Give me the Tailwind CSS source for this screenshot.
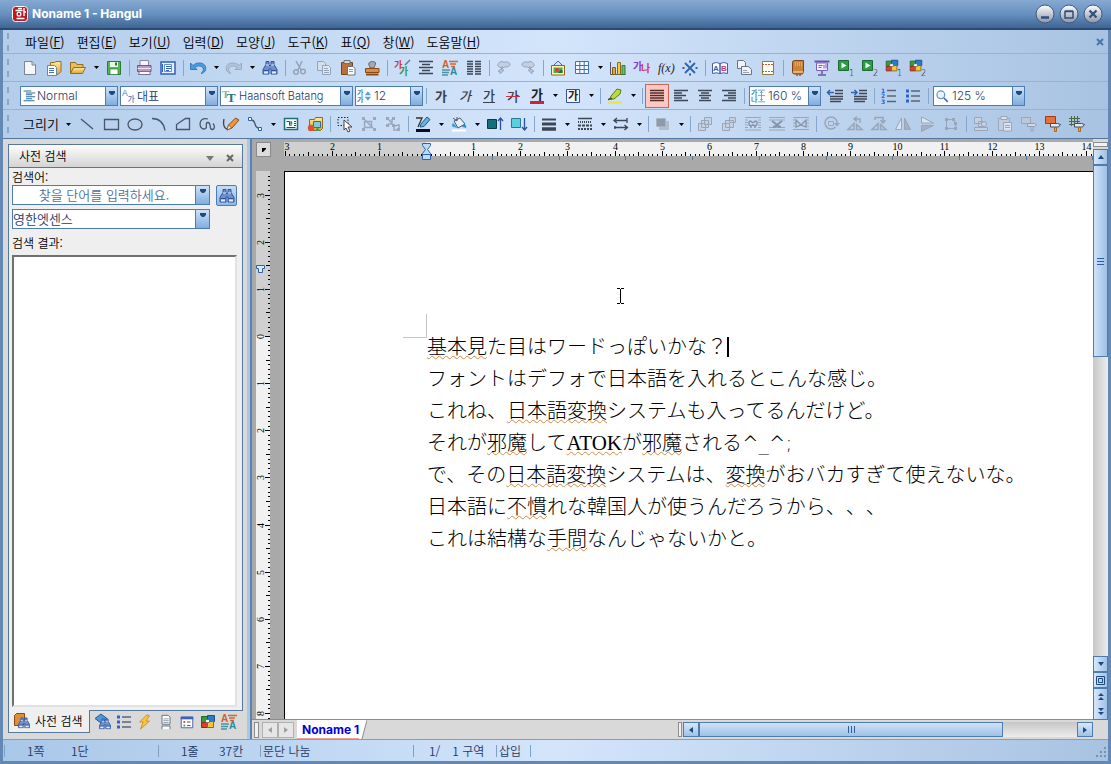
<!DOCTYPE html>
<html lang="ko">
  <head>
    <meta charset="UTF-8" />
    <meta name="viewport" content="width=device-width, initial-scale=1.0" />
    <script src="https://cdn.jsdelivr.net/npm/@tailwindcss/browser@4"></script>
    <title>Noname 1 - Hangul</title>
  </head>
  <body class="flex h-screen flex-col overflow-hidden bg-[#5a7fa8] font-['Noto_Sans_CJK_KR',sans-serif] text-[13px] leading-4 font-[350] text-black select-none">
    <!-- icon sprite -->
    <svg class="absolute size-0" xmlns="http://www.w3.org/2000/svg">
      <defs>
        <linearGradient id="gGold" x1="0" y1="0" x2="0" y2="1"><stop offset="0" stop-color="#fdeb9a" /><stop offset="1" stop-color="#dca23a" /></linearGradient>
        <linearGradient id="gSilver" x1="0" y1="0" x2="0" y2="1"><stop offset="0" stop-color="#fff" /><stop offset=".5" stop-color="#c3c9d3" /><stop offset="1" stop-color="#8b95a5" /></linearGradient>
      </defs>
      <symbol id="new" viewBox="0 0 18 18"><path d="M3.500 2.500h7.500l3.500 3.500v9.500h-11z" fill="#f6f7fa" stroke="#7b8290" /><path d="M11 2.500v3.500h3.500" fill="#cfd4de" stroke="#7b8290" /></symbol>
      <symbol id="docs" viewBox="0 0 18 18"><path d="M5.500 3.500h4l1.500-1h5v10l-3 3h-7.500z" fill="url(#gGold)" stroke="#9a6d1c" /><path d="M2.500 6.500h7l2 2v8h-9z" fill="#fff" stroke="#6d87a8" /><path d="M4 9.500h5M4 11.500h5M4 13.500h5" stroke="#4a6fa5" /></symbol>
      <symbol id="open" viewBox="0 0 18 18"><path d="M1.500 14.500v-11h5l1.500 2h6v3" fill="#e8bd5a" stroke="#9a6d1c" /><path d="M1.500 14.500l3-6h12l-3 6z" fill="url(#gGold)" stroke="#9a6d1c" /></symbol>
      <symbol id="save" viewBox="0 0 18 18"><path d="M2.500 2.500h13v13h-13z" fill="#58b558" stroke="#2c7a34" /><path d="M5 3h8v5H5z" fill="#eafbe4" /><path d="M5 10h8v5.500H5z" fill="#fff" stroke="#2c7a34" stroke-width=".7" /><path d="M10 3.500h2v3h-2z" fill="#2c7a34" /></symbol>
      <symbol id="print" viewBox="0 0 18 18"><path d="M5 1.500h8.500v6H5z" fill="#f4f4fb" stroke="#8a83a8" /><path d="M2.500 6.500h13.500v6H2.500z" fill="#b89ac4" stroke="#6d5a80" /><path d="M2.500 9.500h13.500" stroke="#efe2f4" /><path d="M4.500 12.500h10l1 3h-12z" fill="#fff" stroke="#77708c" /></symbol>
      <symbol id="preview" viewBox="0 0 18 18"><path d="M2 3h14v12H2z" fill="#e9f2ff" stroke="#2f5fc0" stroke-width="1.500" /><path d="M5.500 5.500h7v7h-7z" fill="#fff" stroke="#6a8fd0" /><path d="M3.500 5v8M7 7.500h5M7 9.500h5M7 11.500h3" stroke="#2f5fc0" /></symbol>
      <symbol id="undo" viewBox="0 0 18 18"><path d="M1.500 4v6.500h6.500l-2-2c3-2.500 7-1.500 8 .5s0 4-2 5.500c4-.5 5.500-4 4.500-7-1.500-4-8.500-5-12.500-1z" fill="#4a9be0" stroke="#2369b0" stroke-width=".8" /></symbol>
      <symbol id="redo" viewBox="0 0 18 18"><path d="M16.500 4v6.500h-6.500l2-2c-3-2.500-7-1.500-8 .5s0 4 2 5.500c-4-.5-5.500-4-4.500-7 1.500-4 8.500-5 12.500-1z" fill="#b4c4d8" stroke="#8fa2ba" stroke-width=".8" /></symbol>
      <symbol id="find" viewBox="0 0 18 18"><path d="M5 2.500h3v4h2v-4h3v3l3 5v4.500h-6v-5h-2v5H2v-4.500l3-5z" fill="#6f8fcf" stroke="#30529b" /><path d="M2.500 11.500h5M10.500 11.500h5" stroke="#30529b" /><path d="M5 6h3M10 6h3" stroke="#dbe7fb" /><path d="M3 13.500h4M11 13.500h4" stroke="#e6eefc" stroke-width="2" /></symbol>
      <symbol id="cut" viewBox="0 0 18 18"><path d="M5 2l5 9M11 2l-4 9" stroke="#94a3b8" stroke-width="1.500" fill="none" /><circle cx="5" cy="13" r="2.300" fill="none" stroke="#94a3b8" stroke-width="1.500" /><circle cx="12" cy="12.500" r="2.300" fill="none" stroke="#94a3b8" stroke-width="1.500" /></symbol>
      <symbol id="copy" viewBox="0 0 18 18"><path d="M2.500 2.500h6l2 2v7h-8z" fill="#d5dfec" stroke="#94a3b8" /><path d="M7.500 6.500h6l2 2v7h-8z" fill="#dfe7f1" stroke="#94a3b8" /><path d="M9 9.500h4M9 11.500h5M9 13.500h5" stroke="#94a3b8" /></symbol>
      <symbol id="paste" viewBox="0 0 18 18"><path d="M2.500 3.500h11v12h-11z" fill="#b9733a" stroke="#7a4416" /><path d="M5 1.500h6v3H5z" fill="#d6d9df" stroke="#6b7280" /><path d="M8.500 7.500h5.500l2 2v6.500H8.500z" fill="#fff" stroke="#6b7280" /><path d="M10 10.500h4M10 12.500h4" stroke="#8b98ad" /></symbol>
      <symbol id="stamp" viewBox="0 0 18 18"><path d="M7 9c0-2-2-3-1-5s6-2 6.500 0-1.500 3-1.500 5z" fill="#a7a9b0" stroke="#5c6068" /><path d="M2.500 9.500h13.500v4H2.500z" fill="#d98b4a" stroke="#8a4a18" /><path d="M3 15.500h12.500" stroke="#8a4a18" stroke-width="2" /></symbol>
      <symbol id="charshape" viewBox="0 0 18 18"><text x="1" y="9" font-size="9" font-weight="bold" fill="#c23a4a">가</text><text x="6" y="16" font-size="10" font-weight="bold" fill="#2f9a5a">가</text><path d="M12 6l5-5" stroke="#6a7486" stroke-width="1.500" /></symbol>
      <symbol id="parashape" viewBox="0 0 18 18"><path d="M2 2.500h14M5 5.500h8M2 8.500h14M5 11.500h8M2 14.500h14" stroke="#3c4654" stroke-width="1.500" /></symbol>
      <symbol id="style" viewBox="0 0 18 18"><text x="1" y="9" font-size="10" font-weight="bold" font-family="Liberation Sans" fill="#d0602a">A</text><text x="9" y="16" font-size="10" font-weight="bold" font-family="Liberation Sans" fill="#2a8a9a">A</text><path d="M8 2.500h9M9 5h6M10 7.500h4" stroke="#c96a3c" stroke-width="1.300" /><path d="M1 11h8M1 13.500h7M1 16h6" stroke="#4a93a3" stroke-width="1.300" /></symbol>
      <symbol id="columns" viewBox="0 0 18 18"><path d="M2 2.500h6M2 5h6M2 7.500h6M2 10h6M2 12.500h6M2 15h6M10 2.500h6M10 5h6M10 7.500h6M10 10h6M10 12.500h6M10 15h6" stroke="#3c4654" stroke-width="1.300" /></symbol>
      <symbol id="cloudL" viewBox="0 0 18 18"><path d="M8 8c-4 2-7-2-4-4 1-2 4-2 5-.5 2-1.500 7 0 6 2.500s-4 2-6 2l-3 3h3l-4 4v-3l-2 .5z" fill="#c3cfdf" stroke="#95a6bd" /></symbol>
      <symbol id="cloudR" viewBox="0 0 18 18"><path d="M10 8c4 2 7-2 4-4-1-2-4-2-5-.5-2-1.500-7 0-6 2.500s4 2 6 2l3 3h-3l4 4v-3l2 .5z" fill="#c3cfdf" stroke="#95a6bd" /></symbol>
      <symbol id="picture" viewBox="0 0 18 18"><path d="M5 6l4-4 4 4" fill="none" stroke="#4466a8" /><path d="M2.500 6.500h13v9.500h-13z" fill="#fdf3c0" stroke="#8a6a1c" /><path d="M4.500 8.500h9v5.500h-9z" fill="#58a858" /><circle cx="8" cy="11" r="2" fill="#d8402c" /><path d="M9 14l3-3.500 1.500 1V14z" fill="#2a6e34" /></symbol>
      <symbol id="table" viewBox="0 0 18 18"><path d="M2.500 2.500h13v12h-13zM2.500 6.500h13M2.500 10.500h13M6.800 2.500v12M11.200 2.500v12" fill="#f4f9ff" stroke="#3f6fc0" /></symbol>
      <symbol id="chart" viewBox="0 0 18 18"><path d="M1.500 3v12.500h15" fill="none" stroke="#49586e" /><path d="M3.500 8.500h3v7h-3z" fill="#e8a03a" stroke="#8a5a1a" /><path d="M8.500 3.500h3v12h-3z" fill="#f2cb3a" stroke="#8a6a1c" /><path d="M13 6.500h3v9h-3z" fill="#6fc06a" stroke="#2f7a34" /></symbol>
      <symbol id="wordart" viewBox="0 0 18 18"><text x="0" y="11" font-size="10" font-weight="bold" fill="#8a3ac0">가</text><text x="8" y="13" font-size="10" font-weight="bold" fill="#d03a6a">나</text></symbol>
      <symbol id="fx" viewBox="0 0 18 18"><text x="1" y="13" font-size="12" font-style="italic" font-family="Liberation Serif" fill="#222">f(x)</text></symbol>
      <symbol id="snow" viewBox="0 0 18 18"><path d="M4 4l10 10M14 4L4 14" stroke="#2f62b0" stroke-width="1.800" /><path d="M8 2.500h2M8 15.500h2M2.500 8v2M15.500 8v2" stroke="#2f62b0" stroke-width="2" /></symbol>
      <symbol id="ab" viewBox="0 0 18 18"><path d="M1.500 4.500q4-2 7.500 0v10q-4-1.500-7.500 0zM9 4.500q4-2 7.500 0v10q-4-1.500-7.500 0z" fill="#fff" stroke="#4a5a9a" /><text x="2" y="12" font-size="8" font-weight="bold" font-family="Liberation Sans" fill="#2f62c0">A</text><text x="10" y="12" font-size="8" font-weight="bold" font-family="Liberation Sans" fill="#c03a8a">B</text></symbol>
      <symbol id="twodoc" viewBox="0 0 18 18"><path d="M2.500 1.500h6l2 2v6h-8z" fill="#eef1f6" stroke="#6b7280" /><path d="M6.500 7.500h7l3 3v5h-10z" fill="#eef1f6" stroke="#6b7280" /><path d="M8 11.500h4M8 13.500h6" stroke="#9aa3b3" /></symbol>
      <symbol id="pagenote" viewBox="0 0 18 18"><path d="M3.500 2.500h11v13h-11z" fill="#fffdf0" stroke="#8a7a4a" /><path d="M3 5.500h12M3 12.500h12" stroke="#e04a3a" stroke-dasharray="2 1" /></symbol>
      <symbol id="book" viewBox="0 0 18 18"><path d="M3.500 3.500q0-2 2-2h9v11l-1 2.500h-8q-2 0-2-2z" fill="#c9853a" stroke="#7a4416" /><path d="M6 4h7M6 6h7" stroke="#f6cf7a" stroke-dasharray="1 1" /><path d="M4 13h10" stroke="#fbe6b8" /><path d="M8 14v3M11 14v3" stroke="#d03a2a" stroke-width="1.500" /></symbol>
      <symbol id="present" viewBox="0 0 18 18"><path d="M1.500 2.500h15" stroke="#6a52a8" stroke-width="2" /><path d="M3.500 4h11v7.500h-11z" fill="#f4efff" stroke="#7a62b8" /><path d="M5.500 6.500h4M5.500 8.500h3M11 9.500V6M13 9.500V5" stroke="#8a52c8" /><path d="M9 12v3M5 16h8" stroke="#6a52a8" stroke-width="1.500" /></symbol>
      <symbol id="play1" viewBox="0 0 18 18"><path d="M1.500 1.500h10v10h-10z" fill="#2f9a4a" stroke="#1d6a30" /><path d="M4.500 3.500l5 3-5 3z" fill="#e8ffe8" /><text x="12" y="17" font-size="8" font-family="DejaVu Sans">1</text></symbol>
      <symbol id="play2" viewBox="0 0 18 18"><path d="M1.500 1.500h10v10h-10z" fill="#2f9a4a" stroke="#1d6a30" /><path d="M4.500 3.500l5 3-5 3z" fill="#e8ffe8" /><text x="12" y="17" font-size="8" font-family="DejaVu Sans">2</text></symbol>
      <symbol id="cubes" viewBox="0 0 18 18"><path d="M2.500 3.500h6v6h-6z" fill="#3a9a3a" stroke="#1d6a30" /><path d="M8.500 2.500h7v6h-7z" fill="#2a7ac8" stroke="#1f4f8a" /><path d="M2.500 9.500h6v5h-6z" fill="#d8402c" stroke="#8a2f1a" /><path d="M8.500 8.500h6v6h-6z" fill="#f2c83a" stroke="#8a6a1c" /><path d="M6.500 6.500h4v3h-4z" fill="#fff" stroke="#555" stroke-width=".7" /></symbol>
      <symbol id="cubes1" viewBox="0 0 18 18"><use href="#cubes" x="-1" y="-1" width="16" height="16" /><text x="12" y="17" font-size="8" font-family="DejaVu Sans">1</text></symbol>
      <symbol id="cubes2" viewBox="0 0 18 18"><use href="#cubes" x="-1" y="-1" width="16" height="16" /><text x="12" y="17" font-size="8" font-family="DejaVu Sans">2</text></symbol>

      <symbol id="ga" viewBox="0 0 18 18"><text x="3" y="14" font-size="13" font-weight="bold" fill="#3a3f48">가</text></symbol>
      <symbol id="gaI" viewBox="0 0 18 18"><text x="3" y="14" font-size="13" font-style="italic" font-weight="500" fill="#3a3f48">가</text></symbol>
      <symbol id="gaU" viewBox="0 0 18 18"><text x="3" y="13" font-size="13" font-weight="500" fill="#3a3f48">가</text><path d="M3 15.500h12" stroke="#3a3f48" /></symbol>
      <symbol id="gaS" viewBox="0 0 18 18"><text x="3" y="14" font-size="13" font-weight="500" fill="#3a3f48">가</text><path d="M2 9.500h14" stroke="#d0304a" /></symbol>
      <symbol id="gaC" viewBox="0 0 18 18"><text x="3" y="12" font-size="13" font-weight="bold" fill="#222">가</text><path d="M2 15.500h14" stroke="#d0203a" stroke-width="3" /></symbol>
      <symbol id="gaB" viewBox="0 0 18 18"><path d="M2.500 2.500h13v13h-13z" fill="#f2f6ff" stroke="#3050a8" /><text x="4" y="13" font-size="11" font-weight="bold" fill="#222">가</text></symbol>
      <symbol id="marker" viewBox="0 0 18 18"><path d="M5 9l6-7 4 1-1 4-6 5H4z" fill="#b8dc3a" stroke="#5a7a1c" /><path d="M2 12.500l4-1" stroke="#444" stroke-width="1.500" /><path d="M2 15.500h14" stroke="#e8e84a" stroke-width="3" /></symbol>
      <symbol id="justify" viewBox="0 0 18 18"><path d="M2 3.500h14M2 6h14M2 8.500h14M2 11h14M2 13.500h14" stroke="#5a2a2a" stroke-width="1.300" /></symbol>
      <symbol id="alignL" viewBox="0 0 18 18"><path d="M2 3.500h14M2 6h8M2 8.500h12M2 11h8M2 13.500h14" stroke="#3c4654" stroke-width="1.300" /></symbol>
      <symbol id="alignC" viewBox="0 0 18 18"><path d="M2 3.500h14M5 6h8M3 8.500h12M5 11h8M3 13.500h12" stroke="#3c4654" stroke-width="1.300" /></symbol>
      <symbol id="alignR" viewBox="0 0 18 18"><path d="M2 3.500h14M8 6h8M4 8.500h12M8 11h8M2 13.500h14" stroke="#3c4654" stroke-width="1.300" /></symbol>
      <symbol id="outdent" viewBox="0 0 18 18"><path d="M9 3.500h8M9 6.500h8M4 9.500h13M4 12h13M4 14.500h11" stroke="#3c4654" stroke-width="1.500" /><path d="M1 5.500h7M4 3L1.500 5.500 4 8" fill="none" stroke="#2f62b0" stroke-width="1.500" /></symbol>
      <symbol id="indent" viewBox="0 0 18 18"><path d="M9 3.500h8M9 6.500h8M4 9.500h13M4 12h13M4 14.500h11" stroke="#3c4654" stroke-width="1.500" /><path d="M1 5.500h6M4.500 3L7 5.500 4.500 8" fill="none" stroke="#2f62b0" stroke-width="1.500" /></symbol>
      <symbol id="numlist" viewBox="0 0 18 18"><g font-size="6" font-weight="bold" font-family="DejaVu Sans" fill="#2f62d0"><text x="1" y="6">1</text><text x="1" y="11">2</text><text x="1" y="16.500">3</text></g><path d="M7 3.500h9M7 9h9M7 14.500h9" stroke="#5a6678" stroke-width="1.300" /></symbol>
      <symbol id="bullist" viewBox="0 0 18 18"><path d="M2 2.500h3v3H2zM2 7.500h3v3H2zM2 12.500h3v3H2z" fill="#2f62d0" /><path d="M7 4h9M7 9h9M7 14h9" stroke="#5a6678" stroke-width="1.300" /></symbol>

      <symbol id="line" viewBox="0 0 18 18"><path d="M3 4l12 10" stroke="#4a5568" stroke-width="1.300" /></symbol>
      <symbol id="rect" viewBox="0 0 18 18"><path d="M2.500 4.500h14v10h-14z" fill="none" stroke="#4a5568" stroke-width="1.300" /></symbol>
      <symbol id="ellipse" viewBox="0 0 18 18"><ellipse cx="9" cy="9.500" rx="7" ry="5.500" fill="none" stroke="#4a5568" stroke-width="1.300" /></symbol>
      <symbol id="arc" viewBox="0 0 18 18"><path d="M2 3.500q11 0 13 12" fill="none" stroke="#4a5568" stroke-width="1.300" /></symbol>
      <symbol id="poly" viewBox="0 0 18 18"><path d="M2.500 14.500v-5l9-6h4v11z" fill="none" stroke="#4a5568" stroke-width="1.300" /></symbol>
      <symbol id="curve" viewBox="0 0 18 18"><path d="M10 4c-5-1.500-8 1-8 5s3 6 5.500 4.500-1-6 2.500-6 1 7 4 7 3-4 1-6" fill="none" stroke="#4a5568" stroke-width="1.300" /></symbol>
      <symbol id="pencil" viewBox="0 0 18 18"><path d="M2 4c-1 5 0 9 3 10" fill="none" stroke="#444" stroke-width="1.300" /><path d="M5 15l1.500-5 7-7 3.500 2-7 8z" fill="#f0963a" stroke="#8a4a18" /><path d="M5 15l1.500-5 3 3z" fill="#fbe6c8" stroke="#8a4a18" stroke-width=".7" /></symbol>
      <symbol id="connect" viewBox="0 0 18 18"><path d="M5 5q3 0 4 4t4 4" fill="none" stroke="#4a5568" stroke-width="1.300" /><path d="M2.500 2.500h3v3h-3zM12.500 12.500h3v3h-3z" fill="#fff" stroke="#2f62b0" /></symbol>
      <symbol id="textbox" viewBox="0 0 18 18"><path d="M2.500 3.500h13v11h-13z" fill="#f4fffc" stroke="#1f6f7a" stroke-width="1.500" /><path d="M4.500 6.500h3v4M9 6v5M9 8h1.500M12 6.500h2M12 8.500h2M12 10.500h2M4.500 12.500h9" stroke="#1f4f5a" fill="none" /></symbol>
      <symbol id="clipart" viewBox="0 0 18 18"><path d="M3.500 4.500h5l1-2h7v11l-2 2h-11z" fill="url(#gGold)" stroke="#8a6a1c" /><path d="M7.500 6.500h7v6h-7z" fill="#8ac8d8" stroke="#3a6a8a" /><circle cx="5" cy="13" r="3.200" fill="#e0502c" /><path d="M9 16l2.500-4 2.500 4z" fill="#4a9a4a" /></symbol>
      <symbol id="pick" viewBox="0 0 18 18"><path d="M2 2.500h10v8H2z" fill="none" stroke="#222" stroke-dasharray="1.500 1.500" /><path d="M8 5l8 7h-4l2 4-2 1-2-4-2 2z" fill="#fff" stroke="#444" /></symbol>
      <symbol id="group" viewBox="0 0 18 18"><path d="M5 5l8 8M4.500 6.500h7v6h-7z" fill="none" stroke="#9aa8bb" stroke-width="1.500" /><path d="M2 2h3v3H2zM13 13h3v3h-3zM2 13h3v3H2zM13 2h3v3h-3z" fill="#9aa8bb" /></symbol>
      <symbol id="ungroup" viewBox="0 0 18 18"><path d="M3 3l5 5M8 4v5H4M15 10v5h-5v-4z" fill="none" stroke="#9aa8bb" stroke-width="1.500" /><path d="M2 2h3v3H2zM8 2h3v3H8zM2 9h3v3H2zM8 9h3v3H8zM13 13h3v3h-3z" fill="#9aa8bb" /></symbol>
      <symbol id="linecolor" viewBox="0 0 18 18"><path d="M2 3h6L4 12" fill="none" stroke="#333" stroke-width="1.300" /><path d="M6 12l1-3 6-7 3 2.500-6 7z" fill="#6ab0e0" stroke="#1f5a8a" /><path d="M2 15.500h14" stroke="#0a0a2a" stroke-width="3" /></symbol>
      <symbol id="fill" viewBox="0 0 18 18"><path d="M4 6l6-3 5 6-7 4z" fill="#e8eef6" stroke="#49586e" /><path d="M3 3l4 3v-4" fill="none" stroke="#49586e" /><path d="M14 9q3 1 2 4-2-1-4-1z" fill="#2a8ad0" /><path d="M3 8q-2 2 0 4l5 1z" fill="#3a9ad8" /><path d="M2 15.500h14" stroke="#fff" stroke-width="2" /></symbol>
      <symbol id="front" viewBox="0 0 18 18"><path d="M1.500 4.500h9v9h-9z" fill="#12707a" stroke="#0a3a44" /><path d="M14.500 15V4M12 6l2.500-3L17 6" fill="none" stroke="#2a52a0" stroke-width="1.300" /></symbol>
      <symbol id="back" viewBox="0 0 18 18"><path d="M1.500 3.500h9v9h-9z" fill="#58d0e0" stroke="#2a7a8a" /><path d="M14.500 3v11M12 12l2.500 3 2.500-3" fill="none" stroke="#2a52a0" stroke-width="1.300" /></symbol>
      <symbol id="linewidth" viewBox="0 0 18 18"><path d="M2 4.500h14" stroke="#3c4654" stroke-width="2" /><path d="M2 9h14" stroke="#3c4654" stroke-width="3" /><path d="M2 14h14" stroke="#3c4654" stroke-width="3.500" /></symbol>
      <symbol id="linestyle" viewBox="0 0 18 18"><path d="M2 3.500h14" stroke="#3c4654" stroke-width="1.500" /><path d="M2 7h14" stroke="#3c4654" stroke-width="2" stroke-dasharray="1 1" /><path d="M2 10.500h14" stroke="#3c4654" stroke-width="2" stroke-dasharray="3 1" /><path d="M2 14h14" stroke="#3c4654" stroke-width="2" stroke-dasharray="2 1" /></symbol>
      <symbol id="arrows" viewBox="0 0 18 18"><path d="M2 5.500h13M5 3L2 5.500 5 8M2 12.500h13M12.500 10l3 2.500-3 2.500M15 3v5M3 11v3" fill="none" stroke="#3c4654" stroke-width="1.300" /></symbol>
      <symbol id="shadow" viewBox="0 0 18 18"><path d="M5 6h10v9H5z" fill="#b3bcc9" /><path d="M2.500 3.500h9v8h-9z" fill="#8e99a9" stroke="#a9b4c4" /></symbol>
      <symbol id="stackA" viewBox="0 0 18 18"><path d="M8.500 2.500h7v7h-7zM5.500 5.500h7v7h-7zM2.500 8.500h7v7h-7z" fill="#c6d2e1" stroke="#98a6b9" /></symbol>
      <symbol id="stackB" viewBox="0 0 18 18"><path d="M2.500 8.500h7v7h-7zM9.500 2.500h6v5h-6zM5.500 5.500h8v7h-8z" fill="#c6d2e1" stroke="#98a6b9" /></symbol>
      <symbol id="wrap" viewBox="0 0 18 18"><path d="M1 2.500h16M1 5h3M14 5h3M1 7.500h3M14 7.500h3M1 10h3M14 10h3M1 12.500h3M14 12.500h3M1 15h16" stroke="#98a6b9" /><path d="M9 8q-4-4-4 0t4 2q4 2 4-2t-4 0M7 10v3M11 10v3" fill="none" stroke="#8694a8" stroke-width="1.500" /></symbol>
      <symbol id="wrapT" viewBox="0 0 18 18"><path d="M1 2.500h16M1 5h16M1 12.500h16M1 15h16" stroke="#98a6b9" /><path d="M4 6l4 3v2l-3 1M14 6l-4 3v2l3 1" fill="none" stroke="#8694a8" stroke-width="2" /></symbol>
      <symbol id="wrapB" viewBox="0 0 18 18"><path d="M1 2.500h16M1 5h2M15 5h2M1 8h3M14 8h3M1 11h2M15 11h2M1 14.500h16" stroke="#98a6b9" /><path d="M4 5l5 5 5-5v7l-5-2-5 2z" fill="none" stroke="#8694a8" stroke-width="1.300" /></symbol>
      <symbol id="rotate" viewBox="0 0 18 18"><path d="M13.500 12A6 6 0 1 1 15 8" fill="none" stroke="#98a6b9" stroke-width="1.500" /><path d="M12 8h6l-3 3.500z" fill="#98a6b9" /><path d="M6.500 6.500h5v4h-5z" fill="none" stroke="#98a6b9" /></symbol>
      <symbol id="rotL" viewBox="0 0 18 18"><path d="M2 14.500h6v-6zM10.500 9.500v5h5.500z" fill="none" stroke="#98a6b9" stroke-width="1.500" /><path d="M9 4h5v4M11 1.500L8 4l3 2.500" fill="none" stroke="#98a6b9" stroke-width="1.500" /></symbol>
      <symbol id="rotR" viewBox="0 0 18 18"><path d="M2 14.500h6v-6zM10.500 9.500v5h5.500z" fill="none" stroke="#98a6b9" stroke-width="1.500" /><path d="M5 5V2.500h8V7M10.500 5L13 8l2.500-3" fill="none" stroke="#98a6b9" stroke-width="1.500" /></symbol>
      <symbol id="flipH" viewBox="0 0 18 18"><path d="M7.500 3v11.500H1.500z" fill="#dbe5f1" stroke="#98a6b9" /><path d="M10.500 3v11.500h6z" fill="#a5b1c2" stroke="#98a6b9" /></symbol>
      <symbol id="flipV" viewBox="0 0 18 18"><path d="M3.500 8V2l12 6z" fill="#dbe5f1" stroke="#98a6b9" /><path d="M3.500 10.500v6l12-6z" fill="#a5b1c2" stroke="#98a6b9" /></symbol>
      <symbol id="nodes" viewBox="0 0 18 18"><path d="M4.500 4.500h8l2 9h-10z" fill="none" stroke="#98a6b9" /><path d="M3 3h3v3H3zM10 3h3v3h-3zM3 12h3v3H3zM12 12h3v3h-3zM12 7h3v3h-3z" fill="#98a6b9" /></symbol>
      <symbol id="objcopy" viewBox="0 0 18 18"><path d="M2.500 2.500h7v6h-7zM6.500 6.500h5v5h-5zM2.500 12.500h13v3h-13z" fill="#c6d2e1" stroke="#98a6b9" /><circle cx="12" cy="9" r="2.500" fill="#c6d2e1" stroke="#98a6b9" /></symbol>
      <symbol id="objpaste" viewBox="0 0 18 18"><path d="M2.500 3.500h11v12h-11z" fill="#c2cedd" stroke="#98a6b9" /><path d="M5 1.500h6v3H5zM7.500 7.500h8v8.500h-8z" fill="#dbe5f1" stroke="#98a6b9" /><path d="M9 10.500h5M9 12.500h5" stroke="#98a6b9" /></symbol>
      <symbol id="brushG" viewBox="0 0 18 18"><path d="M1.500 2.500h9v6h-9z" fill="#bcc8d8" stroke="#98a6b9" /><path d="M7.500 8.500h7l2 1.500-2 1.500h-7zM11 12v4h2v-4" fill="#cfdae7" stroke="#8f9db1" /></symbol>
      <symbol id="brushR" viewBox="0 0 18 18"><path d="M1.500 1.500h10v7h-10z" fill="#e8703a" stroke="#a03a1a" /><path d="M6.500 8.500h7l3 1-2 2.500h-8z" fill="#e4e8ee" stroke="#444b58" /><path d="M10.500 12.500v4h2v-4z" fill="#f2a83a" stroke="#a86a1a" /></symbol>
      <symbol id="brushN" viewBox="0 0 18 18"><path d="M1 3.500h11M1 6.500h11M1 9.500h6M3.500 1v10M6.500 1v8M9.500 1v7" stroke="#4a6a3a" /><path d="M6.500 8.500h7l3 1-2 2.500h-8z" fill="#e4e8ee" stroke="#444b58" /><path d="M10.500 12.500v4h2v-4z" fill="#f2a83a" stroke="#a86a1a" /></symbol>

      <symbol id="dict" viewBox="0 0 18 18"><path d="M1.500 3.500l2-2h8v10l-2 2h-8z" fill="#d8903a" stroke="#8a4a18" /><use href="#find" x="4" y="4" width="14" height="14" /></symbol>
      <symbol id="help" viewBox="0 0 18 18"><path d="M7 1l6 4.500-6 4.500-6-4.500z" fill="#4a9ad8" stroke="#1f5a9a" /><use href="#find" x="4" y="4" width="14" height="14" /></symbol>
      <symbol id="bolt" viewBox="0 0 18 18"><path d="M11 1L3 9h4l-3 8 10-9h-4l4-6z" fill="#f8c83a" stroke="#d08a1a" /></symbol>
      <symbol id="sheet" viewBox="0 0 18 18"><path d="M4.500 1.500h7l2 2v8h-9z" fill="#fff" stroke="#5a6678" /><path d="M6 5.500h6M6 7.500h6M6 9.500h6" stroke="#8a96a8" /><path d="M4.500 17v-3.500h9V17" fill="#fff" stroke="#5a6678" /></symbol>
      <symbol id="form" viewBox="0 0 18 18"><path d="M2.500 3.500h13v12h-13z" fill="#fff" stroke="#3a5a9a" /><path d="M2 4.500h14" stroke="#3a62c0" stroke-width="3" /><path d="M5 8h2v2H5z" fill="#d8402c" /><path d="M5 12h2v2H5z" fill="#3a9a5a" /><path d="M9 9h4M9 13h4" stroke="#444" /></symbol>
      <symbol id="iNormal" viewBox="0 0 18 18"><path d="M2 2.500h10M5 5h12M5 7.500h8M5 10h12M5 12.500h8M2 15h14" stroke="#2a6e9a" stroke-width="1.300" /></symbol>
      <symbol id="iRep" viewBox="0 0 18 18"><text x="0" y="9" font-size="11" font-family="Liberation Sans" fill="#3a82c8">A</text><text x="7" y="17" font-size="10" font-weight="500" fill="#3a82c8">가</text></symbol>
      <symbol id="iFont" viewBox="0 0 18 18"><text x="0" y="12" font-size="14" font-weight="bold" font-family="Liberation Serif" fill="#7ab8a8">T</text><text x="6" y="17" font-size="17" font-weight="bold" font-family="Liberation Serif" fill="#1f7a7a">T</text></symbol>
      <symbol id="iSize" viewBox="0 0 18 18"><text x="0" y="8" font-size="9" font-weight="500" fill="#2a5a9a">가</text><text x="0" y="17" font-size="9" font-weight="500" fill="#2a5a9a">가</text><path d="M14 3l4 5h-8zM14 15l4-5h-8z" fill="#5aa0d8" /></symbol>
      <symbol id="iSpace" viewBox="0 0 18 18"><text x="0" y="8" font-size="9" font-weight="500" fill="#2a5a9a">가</text><text x="0" y="17" font-size="9" font-weight="500" fill="#2a5a9a">나</text><path d="M9 1.500h9M9 8.500h9M9 16.500h9M13.500 3v12M11.500 5l2-2 2 2M11.500 13l2 2 2-2" fill="none" stroke="#4a92d0" /></symbol>
      <symbol id="iZoom" viewBox="0 0 18 18"><circle cx="7.500" cy="7.500" r="5" fill="#e8f4ff" stroke="#5a92c8" stroke-width="1.500" /><path d="M11.500 11.500l5 5" stroke="#3a6aa8" stroke-width="2" /></symbol>
      <symbol id="drop" viewBox="0 0 8 6"><path d="M1 0h6v2L5 4H3L1 2z" fill="#1f4a80" /></symbol>
    </svg>

    <!-- title bar -->
    <header class="flex h-[30px] shrink-0 items-center gap-1 border-b-2 border-[#2c4a70] bg-linear-to-b from-[#86a9d2] via-[#6791c0] to-[#3e6593] pr-2 pl-3">
      <svg class="size-4" viewBox="0 0 16 16"><rect x=".5" y=".5" width="15" height="15" rx="3" fill="#c01822" stroke="#fff" /><path d="M6 2.500h4M3.500 4.500h7M12 2v8M12 6h2M4.500 12.500h8" stroke="#fff" stroke-width="1.400" /><circle cx="7" cy="8" r="1.900" fill="none" stroke="#fff" stroke-width="1.300" /></svg>
      <h1 class="flex-1 font-['Inter',sans-serif] text-[12px] font-bold text-white">Noname 1 - Hangul</h1>
      <div class="flex gap-1">
        <button type="button" aria-label="최소화" class="size-5"><svg class="size-5" viewBox="0 0 20 20"><circle cx="10" cy="10" r="9" fill="url(#gSilver)" stroke="#41587a" /><path d="M6 13.500h8" stroke="#2f4f7d" stroke-width="2.500" /></svg></button>
        <button type="button" aria-label="최대화" class="size-5"><svg class="size-5" viewBox="0 0 20 20"><circle cx="10" cy="10" r="9" fill="url(#gSilver)" stroke="#41587a" /><path d="M6 7.500h8v6.500H6zM6 7h8" fill="none" stroke="#2f4f7d" stroke-width="1.500" /></svg></button>
        <button type="button" aria-label="닫기" class="size-5"><svg class="size-5" viewBox="0 0 20 20"><circle cx="10" cy="10" r="9" fill="url(#gSilver)" stroke="#41587a" /><path d="M6.500 6.500l7 7M13.500 6.500l-7 7" stroke="#2f4f7d" stroke-width="2.200" /></svg></button>
      </div>
    </header>

    <div class="flex min-h-0 flex-1 flex-col border-x-3 border-b-3 border-[#6288b3]">
      <div class="shrink-0 border-b border-[#54779f] bg-linear-to-r from-[#b3cdeb] via-[#d3e5fb] to-[#a8c3e2]">
        <!-- menu -->
        <nav class="flex h-6 items-center gap-3 border-b border-[#94b3d6] pr-1 pl-1">
          <span class="h-[18px] w-[6px] border-l-2 border-dashed border-[#8ba7c8]"></span>
          <a href="#" class="whitespace-nowrap">파일(<u>F</u>)</a>
          <a href="#" class="whitespace-nowrap">편집(<u>E</u>)</a>
          <a href="#" class="whitespace-nowrap">보기(<u>U</u>)</a>
          <a href="#" class="whitespace-nowrap">입력(<u>D</u>)</a>
          <a href="#" class="whitespace-nowrap">모양(<u>J</u>)</a>
          <a href="#" class="whitespace-nowrap">도구(<u>K</u>)</a>
          <a href="#" class="whitespace-nowrap">표(<u>Q</u>)</a>
          <a href="#" class="whitespace-nowrap">창(<u>W</u>)</a>
          <a href="#" class="whitespace-nowrap">도움말(<u>H</u>)</a>
          <button type="button" aria-label="문서 닫기" class="ml-auto"><svg class="size-2" viewBox="0 0 8 8"><path d="M1 1l6 6M7 1L1 7" stroke="#4a76ab" stroke-width="2" /></svg></button>
        </nav>

        <div class="flex h-7 items-center border-b border-[#94b3d6] pl-1">
          <span class="mr-[9px] h-[18px] w-[2px] border-l-2 border-dashed border-[#8ba7c8]"></span>
          <div class="flex" data-tools="new docs open* save | print preview | undo* redo* find | cut copy paste stamp | charshape parashape style columns | cloudL cloudR | picture table* chart wordart fx snow | ab twodoc pagenote | book present play1 play2 cubes1 cubes2"></div>
        </div>

        <div class="flex h-7 items-center border-b border-[#94b3d6] pl-1">
          <span class="mr-[11px] h-[18px] w-[2px] border-l-2 border-dashed border-[#8ba7c8]"></span>
          <div class="flex gap-[2px] text-[12px] text-[#1f3a66]">
            <label class="flex h-5 w-[98px] items-center border border-[#4f7cae] bg-white">
              <svg class="ml-px size-[14px] shrink-0"><use href="#iNormal" /></svg>
              <select aria-label="스타일" class="min-w-0 flex-1 appearance-none pl-px font-['Inter',sans-serif] outline-none"><option>Normal</option></select>
              <span class="flex h-full w-3 justify-center border-l border-[#4f7cae] bg-linear-to-b from-[#cfe2f8] to-[#7fadde] pt-1"><svg class="h-[6px] w-2"><use href="#drop" /></svg></span>
            </label>
            <label class="flex h-5 w-[98px] items-center border border-[#4f7cae] bg-white">
              <svg class="ml-px size-[14px] shrink-0"><use href="#iRep" /></svg>
              <select aria-label="글꼴 종류" class="min-w-0 flex-1 appearance-none pl-px outline-none"><option>대표</option></select>
              <span class="flex h-full w-3 justify-center border-l border-[#4f7cae] bg-linear-to-b from-[#cfe2f8] to-[#7fadde] pt-1"><svg class="h-[6px] w-2"><use href="#drop" /></svg></span>
            </label>
            <label class="flex h-5 w-[133px] items-center border border-[#4f7cae] bg-white">
              <svg class="ml-px size-[14px] shrink-0"><use href="#iFont" /></svg>
              <select aria-label="글꼴" class="min-w-0 flex-1 appearance-none pl-[3px] font-['Inter',sans-serif] text-[11px] outline-none"><option>Haansoft Batang</option></select>
              <span class="flex h-full w-3 justify-center border-l border-[#4f7cae] bg-linear-to-b from-[#cfe2f8] to-[#7fadde] pt-1"><svg class="h-[6px] w-2"><use href="#drop" /></svg></span>
            </label>
            <label class="flex h-5 w-[68px] items-center border border-[#4f7cae] bg-white">
              <svg class="ml-px size-[14px] shrink-0"><use href="#iSize" /></svg>
              <select aria-label="글자 크기" class="min-w-0 flex-1 appearance-none pl-[3px] font-['Inter',sans-serif] outline-none"><option>12</option></select>
              <span class="flex h-full w-3 justify-center border-l border-[#4f7cae] bg-linear-to-b from-[#cfe2f8] to-[#7fadde] pt-1"><svg class="h-[6px] w-2"><use href="#drop" /></svg></span>
            </label>
          </div>
          <div class="flex" data-tools="| ga gaI gaU gaS gaC* gaB* | marker* | justify! alignL alignC alignR |"></div>
          <label class="ml-[2px] flex h-5 w-[72px] items-center border border-[#4f7cae] bg-white text-[12px] text-[#1f3a66]">
            <svg class="ml-px size-[14px] shrink-0"><use href="#iSpace" /></svg>
            <select aria-label="줄 간격" class="min-w-0 flex-1 appearance-none pl-[3px] font-['Inter',sans-serif] outline-none"><option>160 %</option></select>
            <span class="flex h-full w-3 justify-center border-l border-[#4f7cae] bg-linear-to-b from-[#cfe2f8] to-[#7fadde] pt-1"><svg class="h-[6px] w-2"><use href="#drop" /></svg></span>
          </label>
          <div class="ml-[2px] flex" data-tools="outdent indent | numlist bullist |"></div>
          <label class="ml-[2px] flex h-5 w-[92px] items-center border border-[#4f7cae] bg-white text-[12px] text-[#1f3a66]">
            <svg class="ml-px size-[14px] shrink-0"><use href="#iZoom" /></svg>
            <select aria-label="확대" class="min-w-0 flex-1 appearance-none pl-[3px] font-['Inter',sans-serif] outline-none"><option>125 %</option></select>
            <span class="flex h-full w-3 justify-center border-l border-[#4f7cae] bg-linear-to-b from-[#cfe2f8] to-[#7fadde] pt-1"><svg class="h-[6px] w-2"><use href="#drop" /></svg></span>
          </label>
        </div>

        <div class="flex h-7 items-center pl-1">
          <span class="h-[18px] w-[2px] border-l-2 border-dashed border-[#8ba7c8]"></span>
          <button type="button" class="ml-[14px] flex w-[52px] items-center justify-between pr-1">그리기<svg class="h-[3px] w-[5px]" viewBox="0 0 5 3"><path d="M0 0h5L2.500 3z" /></svg></button>
          <div class="flex" data-tools="line rect ellipse arc poly curve pencil connect* textbox clipart | pick group ungroup | linecolor* fill* front back | linewidth* linestyle* arrows* | shadow* | stackA stackB wrap wrapT wrapB | rotate rotL rotR flipH flipV nodes | objcopy objpaste brushG brushR brushN"></div>
        </div>
      </div>

      <div class="flex min-h-0 flex-1">
        <!-- dictionary panel -->
        <aside class="flex w-[244px] shrink-0 flex-col bg-[#d9d9d9] pt-[5px] pr-1 pb-[6px] pl-[5px]">
          <section class="flex min-h-0 flex-1 flex-col border border-[#56789c] bg-[#efefef]">
            <div class="flex h-[23px] shrink-0 items-center border-b border-[#56789c] bg-linear-to-b from-[#fdfdfd] to-[#d4d4d4] pr-2 pl-[10px]">
              <h2 class="flex-1 text-[12px]">사전 검색</h2>
              <button type="button" aria-label="메뉴" class="mt-1 mr-3"><svg class="h-[5px] w-2" viewBox="0 0 8 5"><path d="M0 0h8L4 5z" fill="#777" /></svg></button>
              <button type="button" aria-label="닫기" class="mt-1"><svg class="size-2" viewBox="0 0 8 8"><path d="M1 1l6 6M7 1L1 7" stroke="#666" stroke-width="2" /></svg></button>
            </div>
            <div class="flex min-h-0 flex-1 flex-col pr-[5px] pb-[3px] pl-[3px] text-[12px]">
              <label for="word" class="pt-px leading-4">검색어:</label>
              <div class="flex gap-[6px]">
                <div class="flex h-5 w-[198px] border border-[#4f7cae] bg-white">
                  <input id="word" type="text" placeholder="찾을 단어를 입력하세요." class="min-w-0 flex-1 text-center text-[13px] outline-none placeholder:text-[#4f6f9c]" />
                  <button type="button" aria-label="최근 검색어" class="flex h-full w-[14px] justify-center border-l border-[#4f7cae] bg-linear-to-b from-[#cfe2f8] to-[#7fadde] pt-[3px]"><svg class="h-[6px] w-2"><use href="#drop" /></svg></button>
                </div>
                <button type="button" aria-label="찾기" class="flex size-[21px] items-center justify-center rounded-xs border border-[#4f7cae] bg-linear-to-b from-[#c5dcf6] to-[#8fb9e6]"><svg class="size-[18px]"><use href="#find" /></svg></button>
              </div>
              <label class="mt-[3px] flex h-5 w-[198px] border border-[#4f7cae] bg-white text-[13px] text-[#1f3a66]">
                <select aria-label="사전" class="min-w-0 flex-1 appearance-none outline-none"><option>영한엣센스</option></select>
                <span class="flex h-full w-[14px] justify-center border-l border-[#4f7cae] bg-linear-to-b from-[#cfe2f8] to-[#7fadde] pt-[3px]"><svg class="h-[6px] w-2"><use href="#drop" /></svg></span>
              </label>
              <p class="mt-[6px] mb-1">검색 결과:</p>
              <div class="flex-1 border-2 border-[#e2e2e2] border-t-[#707070] border-l-[#707070] bg-white"></div>
            </div>
          </section>
          <div class="flex h-[22px] shrink-0">
            <button type="button" class="-mt-px flex w-[82px] items-center gap-1 border border-t-0 border-[#56789c] bg-[#efefef] pl-1 text-[12px] whitespace-nowrap"><svg class="size-[18px]"><use href="#dict" /></svg>사전 검색</button>
            <div class="flex items-center pl-[2px]">
              <button type="button" aria-label="도움말" class="w-[21px]"><svg class="mx-auto size-[18px]"><use href="#help" /></svg></button>
              <button type="button" aria-label="목록" class="w-[21px]"><svg class="mx-auto size-[18px]"><use href="#bullist" /></svg></button>
              <button type="button" aria-label="빠른 실행" class="w-[21px]"><svg class="mx-auto size-4"><use href="#bolt" /></svg></button>
              <button type="button" aria-label="쪽" class="w-[21px]"><svg class="mx-auto size-4"><use href="#sheet" /></svg></button>
              <button type="button" aria-label="양식" class="w-[21px]"><svg class="mx-auto size-4"><use href="#form" /></svg></button>
              <button type="button" aria-label="클립아트" class="w-[21px]"><svg class="mx-auto size-[18px]"><use href="#cubes" /></svg></button>
              <button type="button" aria-label="스타일" class="w-[21px]"><svg class="mx-auto size-[18px]"><use href="#style" /></svg></button>
            </div>
          </div>
        </aside>
        <div class="w-[5px] shrink-0 border-r-2 border-[#5b83b0] bg-[#a9c6e6]"></div>

        <!-- editor -->
        <main class="flex min-w-0 flex-1 flex-col bg-[#d9d9d9]">
          <div class="flex min-h-0 flex-1">
            <div class="flex min-w-0 flex-1 flex-col border-b border-[#8c8c8c] bg-[#a9a9a9]">
              <div class="flex h-8 shrink-0 pt-[3px] pl-1">
                <button type="button" aria-label="탭 종류" class="flex size-[15px] items-center justify-center border border-[#8a8a8a] bg-[#dcdcdc]"><svg class="size-1" viewBox="0 0 4 4"><path d="M0 0h4v1L1 4H0z" /></svg></button>
                <svg id="hruler" class="ml-[13px] h-6 min-w-0 flex-1 overflow-hidden"></svg>
              </div>
              <div class="flex min-h-0 flex-1">
                <svg id="vruler" class="ml-1 h-full w-[14px] shrink-0 overflow-hidden"></svg>
                <div class="ml-[14px] flex-1 border-t border-l border-black bg-white pl-[142px]">
                  <article class="relative pt-[159px] font-['Liberation_Serif','Noto_Sans_CJK_JP',serif] text-[20px] leading-8 font-light whitespace-nowrap [text-spacing-trim:space-all]" lang="ja">
                    <svg class="absolute top-[142px] -left-6 size-6" viewBox="0 0 24 24"><path d="M23.500 0v23.500H0" fill="none" stroke="#c4c4c4" /></svg>
                    <svg class="absolute top-[115px] left-[189px] h-[18px] w-[9px]" viewBox="0 0 9 18"><path d="M1 1.500h3M5 1.500h3M4.500 2v14M1 16.500h3M5 16.500h3" stroke="#000" /></svg>
                    <p class="flex items-center"><span><u class="decoration-[#d08a4a] decoration-wavy decoration-1 underline-offset-1">基本見</u>た目はワードっぽいかな？</span><i class="h-5 w-[2px] bg-black"></i></p>
                    <p>フォントはデフォで日本語を入れるとこんな感じ。</p>
                    <p>これね、<u class="decoration-[#d08a4a] decoration-wavy decoration-1 underline-offset-1">日本語変換</u>システムも入ってるんだけど。</p>
                    <p>それが<u class="decoration-[#d08a4a] decoration-wavy decoration-1 underline-offset-1">邪魔</u>して<u class="text-[21px] decoration-[#d08a4a] decoration-wavy decoration-1 underline-offset-1">ATOK</u>が<u class="decoration-[#d08a4a] decoration-wavy decoration-1 underline-offset-1">邪魔</u>される<span class="font-['DejaVu_Sans_Light','DejaVu_Sans',sans-serif] font-extralight">^_^;</span></p>
                    <p>で、その<u class="decoration-[#d08a4a] decoration-wavy decoration-1 underline-offset-1">日本語変換</u>システムは、<u class="decoration-[#d08a4a] decoration-wavy decoration-1 underline-offset-1">変換</u>がおバカすぎて使えないな。</p>
                    <p>日本語に<u class="decoration-[#d08a4a] decoration-wavy decoration-1 underline-offset-1">不慣</u>れな韓国人が使うんだろうから、、、</p>
                    <p>これは結構な<u class="decoration-[#d08a4a] decoration-wavy decoration-1 underline-offset-1">手間</u>なんじゃないかと。</p>
                  </article>
                </div>
              </div>
            </div>
            <!-- vertical scroll bar -->
            <div class="flex w-[15px] shrink-0 flex-col bg-linear-to-r from-[#c6c6c6] to-[#ececec]">
              <div class="flex h-[10px] shrink-0 items-center bg-[#d9d9d9]"><span class="h-[5px] w-full border border-[#8c8c8c] bg-[#f2f2f2]"></span></div>
              <button type="button" aria-label="위로" class="flex h-4 shrink-0 items-center justify-center border border-[#4f7cae] bg-linear-to-r from-[#d6e7fb] to-[#a0c2e6]"><svg class="h-[4px] w-[6px]" viewBox="0 0 6 4"><path d="M3 0l3 4H0z" fill="#1f4a80" /></svg></button>
              <div class="flex h-[192px] shrink-0 items-center justify-center border border-[#4f7cae] bg-linear-to-r from-[#cfe2f9] to-[#9fc0e5]"><svg class="h-[7px] w-[7px]" viewBox="0 0 7 7"><path d="M0 .5h7M0 3.500h7M0 6.500h7" stroke="#2f5f9a" /></svg></div>
              <button type="button" aria-label="아래로" class="mt-auto flex h-4 shrink-0 items-center justify-center border border-[#4f7cae] bg-linear-to-r from-[#d6e7fb] to-[#a0c2e6]"><svg class="h-[4px] w-[6px]" viewBox="0 0 6 4"><path d="M3 4l3-4H0z" fill="#1f4a80" /></svg></button>
              <button type="button" aria-label="찾아가기" class="flex h-4 shrink-0 items-center justify-center border border-[#4f7cae] bg-linear-to-r from-[#d6e7fb] to-[#a0c2e6]"><svg class="size-[9px]" viewBox="0 0 9 9"><path d="M.5.5h8v8h-8zM2.500 2.500h4v4h-4z" fill="none" stroke="#1f4a80" /></svg></button>
              <div class="flex h-8 shrink-0 flex-col items-center justify-between border border-[#4f7cae] bg-linear-to-r from-[#d6e7fb] to-[#a0c2e6] py-1">
                <button type="button" aria-label="이전 쪽" class="flex"><svg class="h-2 w-[6px]" viewBox="0 0 6 8"><path d="M3 0l3 3H0zM3 4l3 3H0z" fill="#1f4a80" /></svg></button>
                <button type="button" aria-label="다음 쪽" class="flex"><svg class="h-2 w-[6px]" viewBox="0 0 6 8"><path d="M3 4l3-3H0zM3 8l3-3H0z" fill="#1f4a80" /></svg></button>
              </div>
            </div>
          </div>

          <!-- document tabs and horizontal scroll bar -->
          <div class="flex h-[19px] shrink-0 items-center pr-[15px] pl-[2px]">
            <span class="mr-[3px] h-4 w-[5px] border border-[#8c8c8c] bg-[#f2f2f2]"></span>
            <button type="button" aria-label="이전 문서" class="flex size-4 items-center justify-center border border-[#b0b0b0] bg-[#e6e6e6]"><svg class="h-[6px] w-[4px]" viewBox="0 0 4 6"><path d="M4 0v6L0 3z" fill="#a0a0a0" /></svg></button>
            <button type="button" aria-label="다음 문서" class="flex size-4 items-center justify-center border border-[#b0b0b0] bg-[#e6e6e6]"><svg class="h-[6px] w-[4px]" viewBox="0 0 4 6"><path d="M0 0v6l4-3z" fill="#a0a0a0" /></svg></button>
            <a href="#" class="ml-[3px] h-full border-b border-[#f0a090] bg-white pt-[2px] pl-[5px] font-['Inter',sans-serif] text-[12px] font-bold whitespace-nowrap text-[#0000d8]">Noname 1</a>
            <svg class="h-full w-2" viewBox="0 0 8 19"><path d="M0 0h8L3 19H0z" fill="#fff" /><path d="M8 0L3 19" stroke="#8c8c8c" /></svg>
            <span class="ml-auto h-[15px] w-1 border border-[#8c8c8c] bg-[#f2f2f2]"></span>
            <div class="ml-px flex h-[15px] w-[410px] bg-linear-to-b from-[#c6c6c6] to-[#ececec]">
              <button type="button" aria-label="왼쪽" class="flex w-4 items-center justify-center border border-[#4f7cae] bg-linear-to-b from-[#d6e7fb] to-[#a0c2e6]"><svg class="h-[6px] w-[4px]" viewBox="0 0 4 6"><path d="M4 0v6L0 3z" fill="#1f4a80" /></svg></button>
              <div class="flex w-[304px] items-center justify-center border border-[#4f7cae] bg-linear-to-b from-[#cfe2f9] to-[#9fc0e5]"><svg class="size-[7px]" viewBox="0 0 7 7"><path d="M.5 0v7M3.500 0v7M6.500 0v7" stroke="#2f5f9a" /></svg></div>
              <button type="button" aria-label="오른쪽" class="ml-auto flex w-4 items-center justify-center border border-[#4f7cae] bg-linear-to-b from-[#d6e7fb] to-[#a0c2e6]"><svg class="h-[6px] w-[4px]" viewBox="0 0 4 6"><path d="M0 0v6l4-3z" fill="#1f4a80" /></svg></button>
            </div>
          </div>
        </main>
      </div>

      <!-- status bar -->
      <footer class="flex h-[22px] shrink-0 items-center border-t border-[#7fa0c4] bg-linear-to-r from-[#a9c7e8] via-[#d3e5fb] to-[#a8c3e2] pl-px text-[12px] whitespace-nowrap text-[#1f3a66]">
        <span class="h-3 w-[43px] border-l border-[#7fa0c4] pl-[22px] leading-3">1쪽</span>
        <span class="ml-6 h-3 w-[88px] border-r border-[#7fa0c4] leading-3">1단</span>
        <span class="ml-[22px] w-[38px] leading-3">1줄</span>
        <span class="h-3 w-[42px] border-r border-[#7fa0c4] leading-3">37칸</span>
        <span class="h-3 w-[153px] border-r border-[#7fa0c4] pl-[2px] leading-3">문단 나눔</span>
        <span class="flex h-3 w-[83px] gap-3 border-r border-[#7fa0c4] pl-[15px] leading-3"><span>1/</span><span>1 구역</span></span>
        <span class="h-3 w-[34px] border-r border-[#7fa0c4] pl-[2px] leading-3">삽입</span>
        <svg class="mt-1 ml-auto size-[13px]" viewBox="0 0 13 13"><path d="M9 1h2v2H9zM5 5h2v2H5zM9 5h2v2H9zM1 9h2v2H1zM5 9h2v2H5zM9 9h2v2H9z" fill="#7391b5" /></svg>
      </footer>
    </div>

    <script>
      // "name" is a button, "name*" adds a drop arrow, "name!" is pressed, "|" is a divider
      document.querySelectorAll("[data-tools]").forEach(function (bar) {
        bar.innerHTML = bar.dataset.tools
          .split(" ")
          .map(function (item) {
            if (item === "|") {
              return '<span class="flex h-6 w-[6px] items-center justify-center"><i class="h-4 w-px bg-[#86a6cb]"></i></span>';
            }
            const id = item.replace(/[*!]/, "");
            const pressed = item.endsWith("!")
              ? " border border-[#c8645a] bg-[#fbc9c2]"
              : "";
            let html =
              '<button type="button" aria-label="' + id + '" class="flex size-6 items-center justify-center' + pressed + '">' +
              '<svg class="size-[18px]"><use href="#' + id + '"/></svg></button>';
            if (item.endsWith("*")) {
              html +=
                '<button type="button" aria-label="' + id + ' 메뉴" class="flex h-6 w-3 items-center justify-center">' +
                '<svg class="h-[3px] w-[5px]" viewBox="0 0 5 3"><path d="M0 0h5L2.500 3z"/></svg></button>';
            }
            return html;
          })
          .join("");
      });

      // rulers, one unit is a centimetre at 125 %
      const UNIT = 47.13;

      function tickLength(i) {
        return i % 10 === 0 ? 5 : i % 5 === 0 ? 4 : 2;
      }

      function drawHorizontal() {
        const ruler = document.getElementById("hruler");
        const width = ruler.getBoundingClientRect().width;
        const zero = 142;
        let s = '<rect width="' + zero + '" height="14" fill="#d0d0d0"/>';
        s += '<rect x="' + zero + '" width="' + width + '" height="14" fill="#f1f1f1"/>';
        for (let i = -30; zero + (i * UNIT) / 10 < width; i++) {
          const x = Math.round(zero + (i * UNIT) / 10) + 0.5;
          s += '<path d="M' + x + " 14v-" + tickLength(i) + '" stroke="#000"/>';
          if (i % 10 === 0 && i !== 0 && x < width - 6) {
            s += '<text x="' + Math.max(x, 3) + '" y="8" font-size="10" text-anchor="middle" font-family="Liberation Serif">' + Math.abs(i / 10) + "</text>";
          }
        }
        for (let x = zero + 66; x < width; x += 66.7) {
          s += '<path d="M' + (Math.round(x) + 0.5) + ' 14v4" stroke="#5a7a9a"/>';
        }
        s += '<path d="M138.500 1.500h8v2l-3 4 3 4v6h-8v-6l3-4-3-4zM138.500 12.500h8" fill="#b9dcf8" stroke="#2f62a8"/>';
        ruler.innerHTML = s;
      }

      function drawVertical() {
        const ruler = document.getElementById("vruler");
        const height = ruler.getBoundingClientRect().height;
        const zero = 165;
        let s = '<rect width="14" height="' + zero + '" fill="#d0d0d0"/>';
        s += '<rect y="' + zero + '" width="14" height="' + height + '" fill="#f1f1f1"/>';
        for (let i = -34; zero + (i * UNIT) / 10 < height; i++) {
          const y = Math.round(zero + (i * UNIT) / 10) + 0.5;
          s += '<path d="M14 ' + y + "h-" + tickLength(i) + '" stroke="#000"/>';
          if (i % 10 === 0 && y < height - 3) {
            s += '<text transform="translate(8 ' + y + ') rotate(-90)" font-size="10" text-anchor="middle" font-family="Liberation Serif">' + Math.abs(i / 10) + "</text>";
          }
        }
        s += '<path d="M.5 94.500h8v3h-2v4h-4v-4h-2z" fill="#d9efff" stroke="#2f62a8"/>';
        ruler.innerHTML = s;
      }

      function drawRulers() {
        drawHorizontal();
        drawVertical();
      }

      drawRulers();
      window.addEventListener("resize", drawRulers);
    </script>
  </body>
</html>
